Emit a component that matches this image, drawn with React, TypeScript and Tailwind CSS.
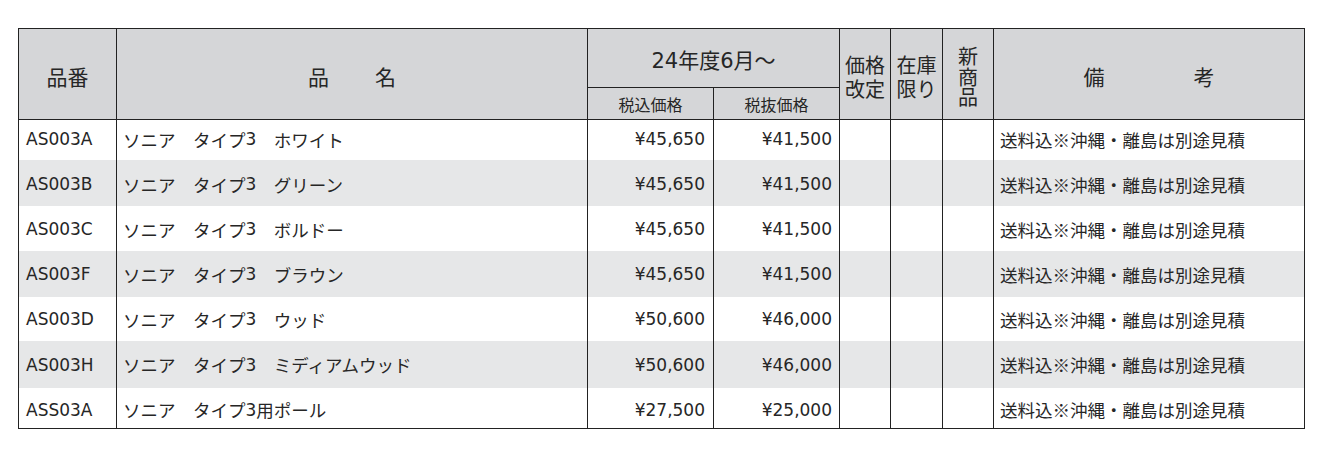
import React from "react";

const LATIN = "font-['DejaVu_Sans',sans-serif]";

function Mixed({ s, latinSize = "" }: { s: string; latinSize?: string }) {
  const parts = s.split(/([A-Za-z0-9¥,]+)/);
  return (
    <>
      {parts.map((p, i) =>
        /^[A-Za-z0-9¥,]+$/.test(p) ? (
          <span key={i} className={`${LATIN} ${latinSize}`}>
            {p}
          </span>
        ) : (
          <React.Fragment key={i}>{p}</React.Fragment>
        )
      )}
    </>
  );
}

const rows = [
  { code: "AS003A", name: "ソニア　タイプ3　ホワイト", inc: "¥45,650", exc: "¥41,500", pad: "pt-0" },
  { code: "AS003B", name: "ソニア　タイプ3　グリーン", inc: "¥45,650", exc: "¥41,500", pad: "pt-[4px]" },
  { code: "AS003C", name: "ソニア　タイプ3　ボルドー", inc: "¥45,650", exc: "¥41,500", pad: "pt-[3px]" },
  { code: "AS003F", name: "ソニア　タイプ3　ブラウン", inc: "¥45,650", exc: "¥41,500", pad: "pt-[2px]" },
  { code: "AS003D", name: "ソニア　タイプ3　ウッド", inc: "¥50,600", exc: "¥46,000", pad: "pt-[2px]" },
  { code: "AS003H", name: "ソニア　タイプ3　ミディアムウッド", inc: "¥50,600", exc: "¥46,000", pad: "pt-[2px]" },
  { code: "ASS03A", name: "ソニア　タイプ3用ポール", inc: "¥27,500", exc: "¥25,000", pad: "pt-[5px]" },
];

const HEAD = "bg-[#d5d6d8] border-r border-b border-[#222] flex items-center justify-center";

export default function App() {
  return (
    <div className="min-h-[452px] w-[1322px] bg-white pt-[28px] pl-[18px] font-['Noto_Sans_CJK_JP',sans-serif] text-[#262626]">
      <div className="grid w-[1287px] grid-cols-[98px_471px_126px_126px_51px_52px_51px_311px] grid-rows-[59px_32px_40px_46px_45px_46px_44px_47px_40px] border-l border-t border-b border-[#222]">
        {/* header */}
        <div className={`${HEAD} row-span-2 pt-[6px] text-[21px]`}>品番</div>
        <div className={`${HEAD} row-span-2 pt-[6px] text-[21px] gap-[46px]`}>
          <span>品</span>
          <span>名</span>
        </div>
        <div className={`${HEAD} col-span-2 pt-[5px] text-[21px]`}>
          <span>
            <Mixed s="24年度6月～" />
          </span>
        </div>
        <div className={`${HEAD} row-span-2 pt-[6px] text-[20px] leading-[24px] text-center`}>
          価格
          <br />
          改定
        </div>
        <div className={`${HEAD} row-span-2 pt-[6px] text-[20px] leading-[24px] text-center`}>
          在庫
          <br />
          限り
        </div>
        <div className={`${HEAD} row-span-2 pt-[6px] text-[20px] leading-[20.5px] text-center`}>
          新
          <br />
          商
          <br />
          品
        </div>
        <div className={`${HEAD} row-span-2 pt-[6px] text-[21px] gap-[89px]`}>
          <span>備</span>
          <span>考</span>
        </div>
        <div className={`${HEAD} text-[16px]`}>税込価格</div>
        <div className={`${HEAD} text-[16px]`}>税抜価格</div>

        {/* body */}
        {rows.map((r, i) => {
          const bg = i % 2 === 1 ? "bg-[#e6e7e8]" : "bg-white";
          const cell = `${bg} ${r.pad} border-r border-[#222] flex items-center`;
          return (
            <React.Fragment key={r.code}>
              <div className={`${cell} pl-[7px] text-[17px] ${LATIN}`}>{r.code}</div>
              <div className={`${cell} pl-[6px] text-[17.5px] whitespace-pre`}>
                <Mixed s={r.name} latinSize="text-[17px]" />
              </div>
              <div className={`${cell} justify-end pr-[8px] text-[17px] ${LATIN}`}>{r.inc}</div>
              <div className={`${cell} justify-end pr-[7px] text-[17px] ${LATIN}`}>{r.exc}</div>
              <div className={cell}></div>
              <div className={cell}></div>
              <div className={cell}></div>
              <div className={`${cell} pl-[6px] text-[17.5px]`}>送料込※沖縄・離島は別途見積</div>
            </React.Fragment>
          );
        })}
      </div>
    </div>
  );
}
